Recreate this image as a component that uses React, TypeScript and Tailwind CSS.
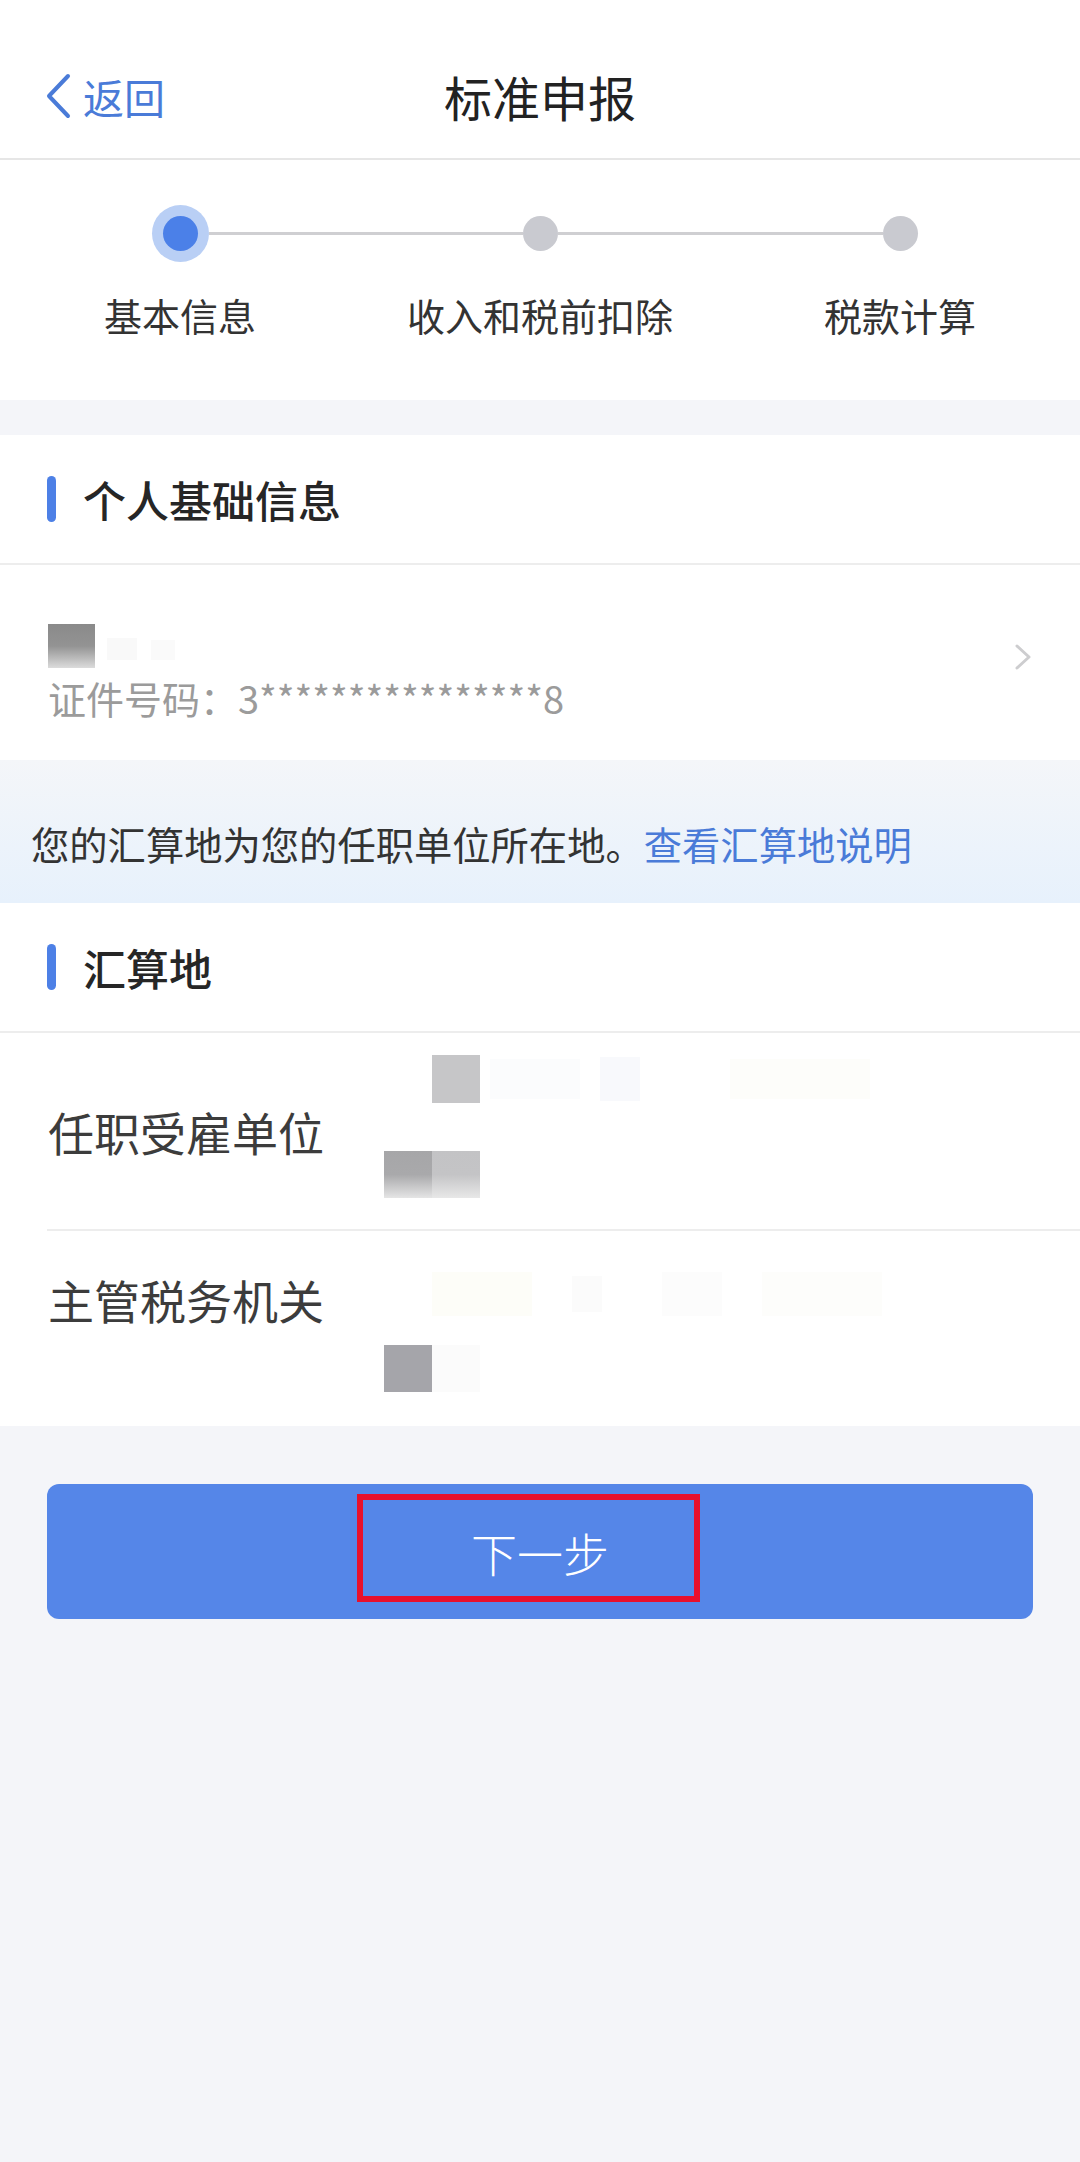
import React from 'react';

const FONT = "font-['Noto_Sans_CJK_SC','Noto_Sans',sans-serif]";

const steps = [
  { label: '基本信息', active: true },
  { label: '收入和税前扣除', active: false },
  { label: '税款计算', active: false },
];

function SectionTitle({ title }: { title: string }) {
  return (
    <div className="flex items-center h-[130px] pl-[47px] border-b-2 border-[#ededed] bg-white">
      <div className="w-[9px] h-[46px] rounded-full bg-[#4d80e6]" />
      <span className="ml-[27px] text-[43px] leading-none font-medium text-[#262626]">{title}</span>
    </div>
  );
}

export default function App() {
  return (
    <div className={`${FONT} min-h-[2162px] w-[1080px] bg-[#f4f5f9]`}>
      {/* header */}
      <div className="grid grid-cols-[1fr_auto_1fr] items-center h-[160px] pt-[34px] bg-white border-b-2 border-[#e6e6e6]">
        <div className="flex items-center pl-[45px] text-[#4a7bd8]">
          <svg width="26" height="46" viewBox="0 0 26 46" fill="none">
            <path d="M23 3 L4 23 L23 43" stroke="#4a7bd8" strokeWidth="4" strokeLinecap="round" strokeLinejoin="round" />
          </svg>
          <span className="ml-[12px] text-[41px] leading-none">返回</span>
        </div>
        <div className="text-[48px] leading-none text-[#222]">标准申报</div>
        <div />
      </div>

      {/* stepper */}
      <div className="h-[240px] bg-white pt-[45px] grid grid-cols-3">
        {steps.map((s, i) => (
          <div key={s.label} className="flex flex-col items-center">
            <div className="flex items-center w-full h-[57px]">
              <div className={`flex-1 h-[3px] ${i === 0 ? 'bg-transparent' : 'bg-[#cfcfd2]'}`} />
              {s.active ? (
                <div className="w-[57px] h-[57px] rounded-full bg-[#b9cff5] flex items-center justify-center">
                  <div className="w-[35px] h-[35px] rounded-full bg-[#4b80e8]" />
                </div>
              ) : (
                <div className="w-[35px] h-[35px] rounded-full bg-[#c9cad0]" />
              )}
              <div className={`flex-1 h-[3px] ${i === steps.length - 1 ? 'bg-transparent' : 'bg-[#cfcfd2]'}`} />
            </div>
            <div className="mt-[27px] text-[38px] leading-[52px] text-[#333]">{s.label}</div>
          </div>
        ))}
      </div>

      <div className="h-[35px]" />

      {/* personal info */}
      <SectionTitle title="个人基础信息" />
      <div className="flex items-center h-[195px] bg-white pr-[48px]">
        <div className="flex-1 flex flex-col pl-[48px] pt-[59px] self-start">
          <div className="flex items-start h-[44px]">
            <div className="w-[47px] h-[44px] bg-gradient-to-b from-[#8a8a8a] via-[#939393] to-[#dcdcdc]" />
            <div className="ml-[12px] mt-[14px] w-[30px] h-[22px] bg-[#f9f9f9]" />
            <div className="ml-[14px] mt-[16px] w-[24px] h-[20px] bg-[#fafafa]" />
          </div>
          <div className="mt-[6px] text-[38px] leading-[48px] text-[#9b9b9b]">证件号码：3****************8</div>
        </div>
        <svg width="18" height="28" viewBox="0 0 18 28" fill="none" className="mb-[12px]">
          <path d="M3 3 L15 14 L3 25" stroke="#cdcdcf" strokeWidth="3" strokeLinecap="round" strokeLinejoin="round" />
        </svg>
      </div>

      {/* notice */}
      <div className="flex items-center h-[143px] pt-[26px] pl-[31px] bg-gradient-to-b from-[#f4f6f9] to-[#e7f1fc] text-[38.3px] leading-none">
        <span className="text-[#333]">您的汇算地为您的任职单位所在地。</span>
        <span className="text-[#4a7bd8]">查看汇算地说明</span>
      </div>

      {/* tax location */}
      <SectionTitle title="汇算地" />
      <div className="bg-white">
        <div className="flex h-[196px] pl-[48px]">
          <div className="w-[336px] self-center text-[46px] leading-[60px] text-[#3c3c3c]">任职受雇单位</div>
          <div className="flex-1 flex flex-col pt-[22px]">
            <div className="flex items-center h-[48px]">
              <div className="ml-[48px] w-[48px] h-[48px] bg-[#c6c6c8]" />
              <div className="ml-[10px] w-[90px] h-[40px] bg-[#fbfcfd]" />
              <div className="ml-[20px] w-[40px] h-[44px] bg-[#f8f9fc]" />
              <div className="ml-[90px] w-[140px] h-[40px] bg-[#fdfdfa]" />
            </div>
            <div className="mt-[48px] flex h-[47px]">
              <div className="w-[48px] h-[47px] bg-gradient-to-b from-[#a6a6a8] via-[#a9a9ab] to-[#e5e5e5]" />
              <div className="w-[48px] h-[47px] bg-gradient-to-b from-[#c3c3c5] via-[#c4c4c6] to-[#e8e8e8]" />
            </div>
          </div>
        </div>
        <div className="ml-[47px] h-[2px] bg-[#ededed]" />
        <div className="flex h-[195px] pl-[48px]">
          <div className="w-[336px] pt-[38px] text-[46px] leading-[60px] text-[#3c3c3c]">主管税务机关</div>
          <div className="flex-1 flex flex-col pt-[36px]">
            <div className="flex items-center h-[53px]">
              <div className="ml-[48px] w-[100px] h-[44px] bg-[#fdfdf8]" />
              <div className="ml-[40px] w-[30px] h-[36px] bg-[#fbfbfb]" />
              <div className="ml-[60px] w-[60px] h-[44px] bg-[#fcfcfc]" />
              <div className="ml-[40px] w-[120px] h-[44px] bg-[#fdfdfb]" />
            </div>
            <div className="mt-[25px] flex h-[47px]">
              <div className="w-[48px] h-[47px] bg-[#a5a5aa]" />
              <div className="w-[48px] h-[47px] bg-[#fbfbfb]" />
            </div>
          </div>
        </div>
      </div>

      {/* next button */}
      <div className="px-[47px] pt-[58px]">
        <div className="relative flex items-center justify-center h-[135px] rounded-[12px] bg-[#5586e8]">
          <span className="text-[46px] leading-none text-white font-light">下一步</span>
          <div className="absolute left-[310px] top-[10px] w-[343px] h-[108px] border-[6px] border-[#e8102c]" />
        </div>
      </div>
    </div>
  );
}
